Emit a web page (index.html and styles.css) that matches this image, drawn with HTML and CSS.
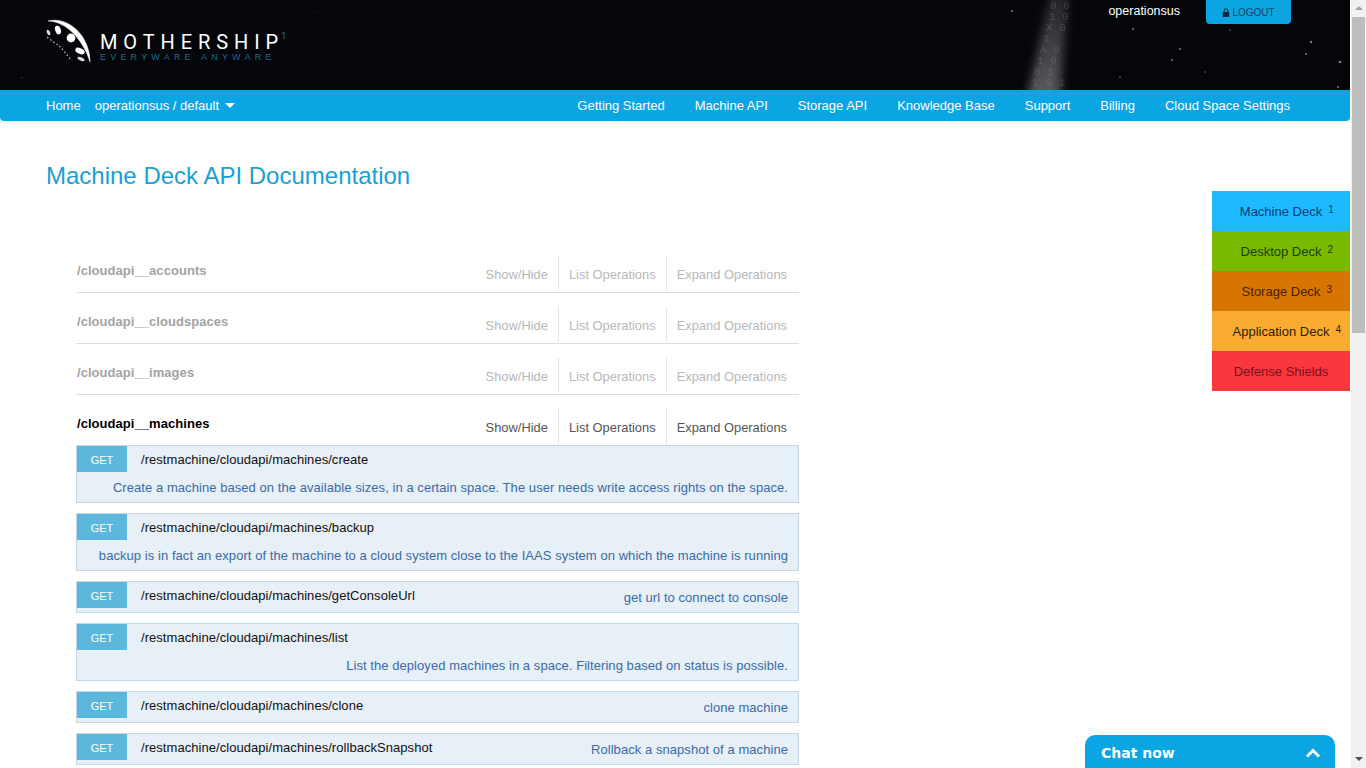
FILE: index.html
```html
<!DOCTYPE html>
<html lang="en">
<head>
    <meta charset="UTF-8">
    <title>Machine Deck API Documentation</title>
    <link rel="stylesheet" href="styles.css">
</head>
<body>
    <div class="page">
        <header class="top-header">
            <svg class="stars" width="1350" height="90" viewBox="0 0 1350 90">
                <defs>
                    <linearGradient id="beamFade" x1="0" y1="0" x2="0" y2="1">
                        <stop offset="0" stop-color="#fff" stop-opacity="0.12"/>
                        <stop offset="1" stop-color="#fff" stop-opacity="0.34"/>
                    </linearGradient>
                    <filter id="beamBlur" x="-50%" width="200%"><feGaussianBlur stdDeviation="5 0"/></filter>
                </defs>
                <polygon points="1050,-5 1068,-5 1060,95 1028,95" fill="url(#beamFade)" filter="url(#beamBlur)"/>
                <g class="beam-digits">
                    <text x="1050" y="9">0 0</text>
                    <text x="1049" y="20">1 0</text>
                    <text x="1046" y="31">X 0</text>
                    <text x="1043" y="42">1</text>
                    <text x="1040" y="53">A 0</text>
                    <text x="1037" y="64">1 0</text>
                    <text x="1034" y="75">0 1</text>
                    <text x="1032" y="86">1 0 1</text>
                </g>
                <g fill="#777b82">
                    <circle cx="1012" cy="11" r="1"/><circle cx="1133" cy="29" r="1"/><circle cx="1180" cy="49" r="1"/>
                    <circle cx="1311" cy="42" r="1.2"/><circle cx="1340" cy="62" r="1.3"/><circle cx="1306" cy="54" r="1"/>
                    <circle cx="1172" cy="60" r="1"/><circle cx="1120" cy="77" r="0.8"/><circle cx="1230" cy="30" r="0.8"/>
                    <circle cx="1338" cy="87" r="1"/><circle cx="1205" cy="72" r="0.7"/>
                </g>
                <g fill="#3a3d42">
                    <circle cx="22" cy="78" r="0.8"/><circle cx="190" cy="30" r="0.6"/><circle cx="315" cy="12" r="0.6"/>
                    <circle cx="520" cy="60" r="0.6"/><circle cx="760" cy="24" r="0.6"/><circle cx="880" cy="70" r="0.6"/>
                    <circle cx="640" cy="40" r="0.5"/>
                </g>
            </svg>
            <a class="logo" href="#">
                <svg class="logo-mark" width="48" height="46" viewBox="0 0 48 46">
                    <path d="M3 2 C 14 -1 28 4 37 17 C 42 25 45 33 45 43 C 42 33 37 24 30 16 C 22 7 12 2 3 2 Z" fill="#fff" stroke="#fff" stroke-width="0.5"/>
                    <ellipse cx="13" cy="11" rx="2.8" ry="4.4" transform="rotate(-20 13 11)" fill="#fff"/>
                    <ellipse cx="3.5" cy="13.5" rx="1.5" ry="3" transform="rotate(-25 3.5 13.5)" fill="#ddd"/>
                    <circle cx="26" cy="19" r="4.4" fill="#fff"/>
                    <ellipse cx="35" cy="32" rx="5" ry="2.8" transform="rotate(25 35 32)" fill="#fff"/>
                    <ellipse cx="36" cy="40" rx="3.8" ry="1.6" transform="rotate(25 36 40)" fill="#ddd"/>
                    <path d="M2 18 C 7 22 11 25 13 26 C 18 30 22 36 26 41" fill="none" stroke="#bbb" stroke-width="1.2" stroke-dasharray="1.6 2.2"/>
                </svg>
                <span class="logo-text">
                    <span class="logo-name">MOTHERSHI<span class="logo-last">P</span><sup>1</sup></span>
                    <span class="logo-tag">EVERYWARE ANYWARE</span>
                </span>
            </a>
            <div class="user-box">
                <span class="user-name">operationsus</span>
                <a class="logout-btn" href="#">
                    <svg width="8" height="9" viewBox="0 0 8 9"><path d="M1.7 4V2.6a2.3 2.3 0 0 1 4.6 0V4h.9v5H.8V4zm1 0h2.6V2.6a1.3 1.3 0 0 0-2.6 0z" fill="#10283a"/></svg>
                    LOGOUT
                </a>
            </div>
        </header>

        <nav class="main-nav">
            <div class="nav-left">
                <a href="#">Home</a>
                <a href="#">operationsus / default <span class="caret"></span></a>
            </div>
            <div class="nav-right">
                <a href="#">Getting Started</a>
                <a href="#">Machine API</a>
                <a href="#">Storage API</a>
                <a href="#">Knowledge Base</a>
                <a href="#">Support</a>
                <a href="#">Billing</a>
                <a href="#">Cloud Space Settings</a>
            </div>
        </nav>

        <main class="content">
            <h1>Machine Deck API Documentation</h1>

            <section class="api-group faded">
                <h2>/cloudapi__accounts</h2>
                <ul class="group-links"><li>Show/Hide</li><li>List Operations</li><li>Expand Operations</li></ul>
            </section>
            <section class="api-group faded">
                <h2>/cloudapi__cloudspaces</h2>
                <ul class="group-links"><li>Show/Hide</li><li>List Operations</li><li>Expand Operations</li></ul>
            </section>
            <section class="api-group faded">
                <h2>/cloudapi__images</h2>
                <ul class="group-links"><li>Show/Hide</li><li>List Operations</li><li>Expand Operations</li></ul>
            </section>
            <section class="api-group open">
                <h2>/cloudapi__machines</h2>
                <ul class="group-links"><li>Show/Hide</li><li>List Operations</li><li>Expand Operations</li></ul>
            </section>

            <div class="operation">
                <div class="op-head"><span class="op-get">GET</span><span class="op-path">/restmachine/cloudapi/machines/create</span></div>
                <p class="op-desc">Create a machine based on the available sizes, in a certain space. The user needs write access rights on the space.</p>
            </div>
            <div class="operation">
                <div class="op-head"><span class="op-get">GET</span><span class="op-path">/restmachine/cloudapi/machines/backup</span></div>
                <p class="op-desc">backup is in fact an export of the machine to a cloud system close to the IAAS system on which the machine is running</p>
            </div>
            <div class="operation short">
                <div class="op-head"><span class="op-get">GET</span><span class="op-path">/restmachine/cloudapi/machines/getConsoleUrl</span><span class="op-note">get url to connect to console</span></div>
            </div>
            <div class="operation">
                <div class="op-head"><span class="op-get">GET</span><span class="op-path">/restmachine/cloudapi/machines/list</span></div>
                <p class="op-desc">List the deployed machines in a space. Filtering based on status is possible.</p>
            </div>
            <div class="operation short">
                <div class="op-head"><span class="op-get">GET</span><span class="op-path">/restmachine/cloudapi/machines/clone</span><span class="op-note">clone machine</span></div>
            </div>
            <div class="operation short">
                <div class="op-head"><span class="op-get">GET</span><span class="op-path">/restmachine/cloudapi/machines/rollbackSnapshot</span><span class="op-note">Rollback a snapshot of a machine</span></div>
            </div>
        </main>

        <aside class="deck-menu">
            <a class="deck machine" href="#">Machine Deck<sup>1</sup></a>
            <a class="deck desktop" href="#">Desktop Deck<sup>2</sup></a>
            <a class="deck storage" href="#">Storage Deck<sup>3</sup></a>
            <a class="deck application" href="#">Application Deck<sup>4</sup></a>
            <a class="deck defense" href="#">Defense Shields</a>
        </aside>
    </div>

    <div class="chat-tab">
        <span>Chat now</span>
        <svg width="16" height="10" viewBox="0 0 16 10"><path d="M2 8.5 8 2.5l6 6" fill="none" stroke="#fff" stroke-width="3"/></svg>
    </div>

    <div class="fake-scrollbar">
        <div class="sb-arrow up"></div>
        <div class="sb-thumb"></div>
        <div class="sb-arrow down"></div>
    </div>
</body>
</html>
```
FILE: styles.css
```css
html, body {
    margin: 0;
    padding: 0;
    height: 768px;
    overflow: hidden;
}
body {
    font-family: "Liberation Sans", Arial, sans-serif;
    background-color: #fff;
}
a {
    text-decoration: none;
    color: inherit;
}
.page {
    width: 1350px;
    height: 768px;
    overflow: hidden;
    position: relative;
}

/* header */
.top-header {
    height: 90px;
    background-color: #05060a;
    position: relative;
    display: flex;
    justify-content: space-between;
    align-items: flex-start;
}
.stars {
    position: absolute;
    left: 0;
    top: 0;
}
.beam-digits {
    font-family: "Liberation Mono", monospace;
    font-size: 11px;
    fill: #8d9196;
    opacity: 0.3;
}
.logo {
    position: relative;
    display: flex;
    margin: 19px 0 0 45px;
    color: #fff;
}
.logo-text {
    display: flex;
    flex-direction: column;
    margin: 13px 0 0 7px;
}
.logo-name {
    font-family: Roboto, sans-serif;
    font-size: 20px;
    line-height: 21px;
    letter-spacing: 5.9px;
    white-space: nowrap;
}
.logo-last {
    letter-spacing: 0;
}
.logo-name sup {
    font-size: 9px;
    line-height: 0;
    letter-spacing: 0;
    color: #1c7fa8;
    margin-left: 3px;
    vertical-align: 10px;
}
.logo-tag {
    font-size: 9px;
    line-height: 9px;
    letter-spacing: 4.2px;
    color: #176d90;
    white-space: nowrap;
}
.user-box {
    position: relative;
    display: flex;
    align-items: flex-start;
    margin-right: 59px;
}
.user-name {
    color: #fff;
    font-size: 12.5px;
    line-height: 22px;
    margin-right: 26px;
}
.logout-btn {
    width: 85px;
    height: 24px;
    background-color: #0aa5e2;
    border-radius: 0 0 4px 4px;
    color: #14405c;
    font-size: 10px;
    display: flex;
    align-items: center;
    justify-content: center;
    gap: 2px;
}

/* nav */
.main-nav {
    height: 31px;
    background-color: #0aa5e2;
    border-radius: 0 0 4px 4px;
    display: flex;
    justify-content: space-between;
    padding: 0 60px 0 46px;
    color: #fff;
    font-size: 13px;
    line-height: 31px;
}
.nav-left {
    display: flex;
    gap: 14px;
}
.nav-right {
    display: flex;
    gap: 30px;
}
.caret {
    display: inline-block;
    width: 0;
    height: 0;
    margin-left: 2px;
    vertical-align: 2px;
    border-left: 5px solid transparent;
    border-right: 5px solid transparent;
    border-top: 5px solid #fff;
}

/* content */
.content {
    padding: 40px 0 0 46px;
}
h1 {
    margin: 0 0 65px;
    font-size: 24px;
    line-height: 30px;
    font-weight: 400;
    color: #1b9fd3;
}
.api-group {
    width: 723px;
    margin-left: 30px;
    height: 36px;
    margin-bottom: 14px;
    border-bottom: 1px solid #ddd;
    display: flex;
    justify-content: space-between;
}
.api-group h2 {
    margin: 0;
    padding-left: 1px;
    font-size: 13px;
    line-height: 29px;
    font-weight: 700;
    letter-spacing: 0.05px;
    color: #000;
}
.api-group.faded h2 {
    color: #a3a3a3;
}
.group-links {
    list-style: none;
    margin: 0;
    padding: 0;
    display: flex;
    font-size: 12.9px;
    line-height: 37px;
    color: #555;
}
.faded .group-links {
    color: #b8b8b8;
}
.group-links li {
    padding: 0 10px;
    height: 35px;
    border-left: 1px solid #e4e4e4;
}
.group-links li:first-child {
    border-left: 0;
}
.group-links li:last-child {
    padding-right: 12px;
}
.api-group.open {
    margin-bottom: 0;
    border-bottom: 0;
}
.operation {
    width: 721px;
    margin: 0 0 10px 30px;
    background-color: #e7eff7;
    border: 1px solid #c5d6e6;
}
.op-head {
    display: flex;
    align-items: center;
    height: 26px;
}
.operation.short {
    height: 30px;
}
.op-get {
    width: 50px;
    height: 26px;
    background-color: #5bb8dc;
    color: #fff;
    font-size: 11px;
    line-height: 28px;
    text-align: center;
}
.op-path {
    margin-left: 14px;
    color: #111;
    font-size: 13px;
    letter-spacing: 0.05px;
}
.op-note {
    margin-left: auto;
    margin-right: 10px;
    padding-top: 4px;
    color: #3a6ba8;
    font-size: 13px;
    letter-spacing: 0.06px;
}
.op-desc {
    margin: 0;
    height: 30px;
    padding-right: 10px;
    text-align: right;
    color: #3a6ba8;
    font-size: 13px;
    line-height: 32px;
    letter-spacing: 0.06px;
}

/* right side menu */
.deck-menu {
    position: absolute;
    left: 1212px;
    top: 191px;
    width: 138px;
    display: flex;
    flex-direction: column;
}
.deck {
    height: 40px;
    display: flex;
    justify-content: center;
    align-items: center;
    font-size: 13px;
    color: #222;
}
.deck sup {
    display: block;
    width: 0;
    text-indent: 6px;
    font-size: 10px;
    line-height: 0;
    margin-top: -2px;
}
.deck.machine { background-color: #1dbaff; color: #0b3a78; }
.deck.desktop { background-color: #79b900; color: #17400f; }
.deck.storage { background-color: #d67600; color: #4a1c06; }
.deck.application { background-color: #f9ac30; color: #2f1c08; }
.deck.defense { background-color: #f9373c; color: #7a0f1c; }

/* chat */
.chat-tab {
    position: fixed;
    left: 1085px;
    top: 735px;
    width: 250px;
    height: 33px;
    box-sizing: border-box;
    padding: 2px 14px 0 16px;
    background-color: #0aa5e2;
    border-radius: 10px 10px 0 0;
    display: flex;
    justify-content: space-between;
    align-items: center;
    color: #fff;
    font-family: "DejaVu Sans", sans-serif;
    font-size: 14px;
    font-weight: 700;
}

/* scrollbar */
.fake-scrollbar {
    position: fixed;
    right: 0;
    top: 0;
    width: 15px;
    height: 768px;
    background-color: #f1f1f1;
    display: flex;
    flex-direction: column;
    align-items: stretch;
}
.sb-thumb {
    height: 316px;
    background-color: #bdbdbd;
    margin: 0 1px;
}
.sb-arrow {
    height: 17px;
    position: relative;
}
.sb-arrow.down {
    margin-top: auto;
}
.sb-arrow::after {
    content: "";
    position: absolute;
    left: 4px;
    top: 6px;
    border-left: 4px solid transparent;
    border-right: 4px solid transparent;
}
.sb-arrow.up::after {
    border-bottom: 4px solid #a3a3a3;
}
.sb-arrow.down::after {
    border-top: 4px solid #505050;
}
```
